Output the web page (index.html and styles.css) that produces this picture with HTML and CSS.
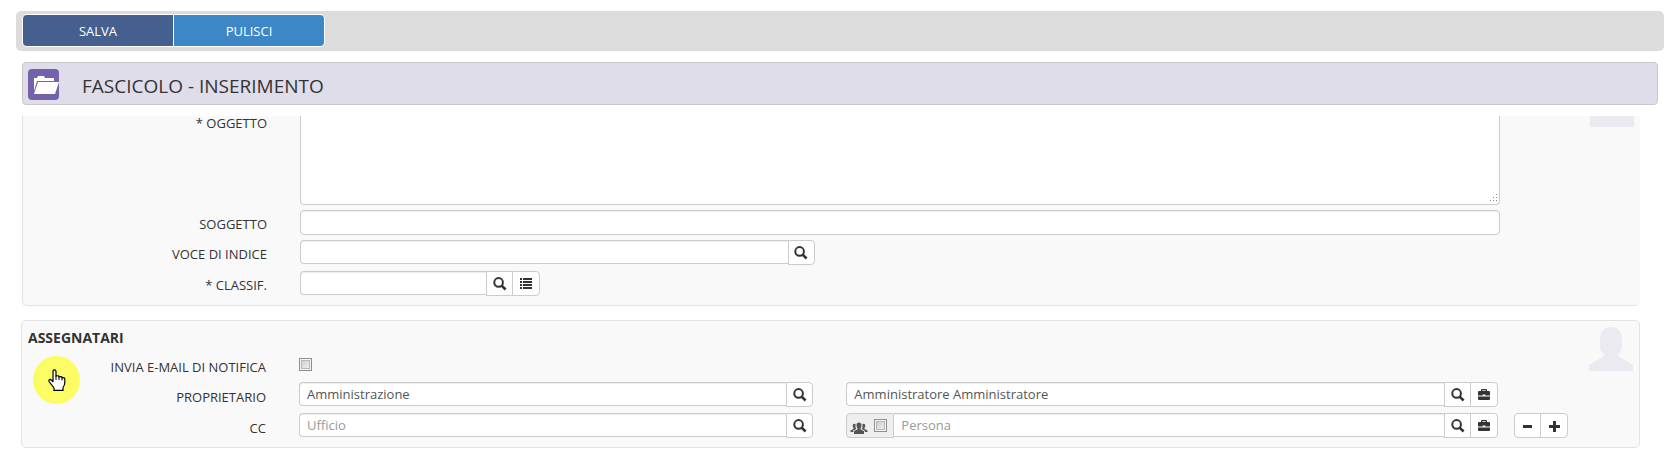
FILE: index.html
```html
<!DOCTYPE html>
<html lang="it">
<head>
  <meta charset="UTF-8">
  <meta name="viewport" content="width=device-width, initial-scale=1.0">
  <title>Fascicolo - Inserimento</title>
  <link rel="stylesheet" href="styles.css">
</head>
<body>

  <!-- shared icons -->
  <svg class="sprite" aria-hidden="true">
    <symbol id="i-search" viewBox="0 0 14 14">
      <circle cx="5.6" cy="5.4" r="4.3" fill="none" stroke="currentColor" stroke-width="2"/>
      <path d="M8.6 8.600L12.600 12.500" stroke="currentColor" stroke-width="2.600"/>
    </symbol>
    <symbol id="i-list" viewBox="0 0 14 14">
      <path d="M1 1h2v2H1zM4 1h9v2H4zM1 4h2v2H1zM4 4h9v2H4zM1 7h2v2H1zM4 7h9v2H4zM1 10h2v2H1zM4 10h9v2H4z" fill="currentColor"/>
    </symbol>
    <symbol id="i-case" viewBox="0 0 14 14">
      <path d="M4 3V2q0-1 1-1h4q1 0 1 1v1h2q1 0 1 1v3.500H8.300V6.600H5.700v.9H1V4q0-1 1-1zM5.300 3h3.400v-.8H5.300zM1 8.500h12V11q0 1-1 1H2q-1 0-1-1z" fill="currentColor"/>
    </symbol>
    <symbol id="i-minus" viewBox="0 0 14 14">
      <path d="M2 6h9v3H2z" fill="currentColor"/>
    </symbol>
    <symbol id="i-plus" viewBox="0 0 14 14">
      <path d="M6 2h3v4h4v3H9v4H6V9H2V6h4z" fill="currentColor"/>
    </symbol>
    <symbol id="i-group" viewBox="0 0 18 12">
      <path d="M9 0.500q2.500 0 2.500 2.800 0 2-1 2.900v1l3.500 2V12H4V9.200l3.500-2v-1q-1-.9-1-2.900Q6.500.5 9 .5z" fill="currentColor"/>
      <path d="M5.600 2q-2-.8-2.800.8-.4 2 .7 3.200v1L.5 8.600V10H3.200V8.800l3-1.900Q5 5 5.600 2zM12.400 2q2-.8 2.800.8.4 2-.7 3.200v1l3 1.600V10h-2.700V8.800l-3-1.900Q13 5 12.400 2z" fill="currentColor"/>
    </symbol>
  </svg>

  <div class="toolbar">
    <div class="btn-bar">
      <button type="button" class="btn btn-save">SALVA</button>
      <button type="button" class="btn btn-clear">PULISCI</button>
    </div>
  </div>

  <header class="page-title">
    <svg class="folder" viewBox="0 0 31 31" aria-hidden="true">
      <rect width="31" height="31" rx="4" fill="#7362ab"/>
      <path d="M6 22V9h3l1-2h6l1 2h9v3H9z" fill="#fff"/>
      <path d="M10 13h21l-4 12H6z" fill="#fff"/>
    </svg>
    <h1>FASCICOLO - INSERIMENTO</h1>
  </header>

  <form class="content">
    <section class="panel panel-top">
      <div class="corner"></div>
      <div class="row row-area">
        <label for="oggetto">* OGGETTO</label>
        <textarea id="oggetto" class="field area"></textarea>
      </div>
      <div class="row">
        <label for="soggetto">SOGGETTO</label>
        <input type="text" id="soggetto" class="field">
      </div>
      <div class="row">
        <label for="voce">VOCE DI INDICE</label>
        <div class="group group-half">
          <input type="text" id="voce" class="field">
          <button type="button" class="addon" aria-label="Cerca"><svg><use href="#i-search"/></svg></button>
        </div>
      </div>
      <div class="row">
        <label for="classif">* CLASSIF.</label>
        <div class="group group-small">
          <input type="text" id="classif" class="field">
          <button type="button" class="addon" aria-label="Cerca"><svg><use href="#i-search"/></svg></button>
          <button type="button" class="addon" aria-label="Elenco"><svg><use href="#i-list"/></svg></button>
        </div>
      </div>
    </section>

    <section class="panel panel-bottom">
      <h2>ASSEGNATARI</h2>
      <svg class="person" viewBox="0 0 44 44" aria-hidden="true">
        <path d="M22 0c7 0 11 5 11 12v7c0 4-2 6-4 8v2l15 9v6H0v-6l15-9v-2c-2-2-4-4-4-8v-7C11 5 15 0 22 0z" fill="#ebeaf1"/>
      </svg>
      <div class="row row-check">
        <label for="notifica">INVIA E-MAIL DI NOTIFICA</label>
        <input type="checkbox" id="notifica" class="check">
      </div>
      <div class="row">
        <label for="proprietario">PROPRIETARIO</label>
        <div class="pair">
          <div class="group group-half">
            <input type="text" id="proprietario" class="field" value="Amministrazione">
            <button type="button" class="addon" aria-label="Cerca"><svg><use href="#i-search"/></svg></button>
          </div>
          <div class="group group-rest">
            <input type="text" class="field" aria-label="Persona proprietario" value="Amministratore Amministratore">
            <button type="button" class="addon" aria-label="Cerca"><svg><use href="#i-search"/></svg></button>
            <button type="button" class="addon" aria-label="Ruolo"><svg><use href="#i-case"/></svg></button>
          </div>
        </div>
      </div>
      <div class="row row-cc">
        <label for="cc">CC</label>
        <div class="pair">
          <div class="group group-half">
            <input type="text" id="cc" class="field" placeholder="Ufficio">
            <button type="button" class="addon" aria-label="Cerca"><svg><use href="#i-search"/></svg></button>
          </div>
          <div class="group group-rest">
            <span class="prepend">
              <svg class="people" aria-hidden="true"><use href="#i-group"/></svg>
              <input type="checkbox" class="check" aria-label="Gruppo">
            </span>
            <input type="text" class="field" aria-label="Persona" placeholder="Persona">
            <button type="button" class="addon" aria-label="Cerca"><svg><use href="#i-search"/></svg></button>
            <button type="button" class="addon" aria-label="Ruolo"><svg><use href="#i-case"/></svg></button>
          </div>
        </div>
        <div class="group">
          <button type="button" class="addon" aria-label="Rimuovi"><svg><use href="#i-minus"/></svg></button>
          <button type="button" class="addon" aria-label="Aggiungi"><svg><use href="#i-plus"/></svg></button>
        </div>
      </div>

      <!-- click highlight with the hand pointer -->
      <div class="pointer">
        <svg viewBox="0 0 18 22" aria-hidden="true">
          <path d="M5 13V2.500Q5 .8 6.500 .8T8 2.500V7q3-.8 3 .8 3-.8 3 1 2.800-.6 2.800 1.500V14q0 2-1.800 4.500V21.300H6V19L1 12.500Q.5 10.500 2.200 10.300 4 10.800 5 13z" fill="#fff" stroke="#000" stroke-width="1.200"/>
          <path d="M8 6.500V11M11 7.500V11M14 8.500V11.500" stroke="#000" fill="none"/>
        </svg>
      </div>
    </section>
  </form>

</body>
</html>
```

FILE: styles.css
```css
* {
  box-sizing: border-box;
}
body {
  margin: 0;
  padding: 11px 16px 14px;
  background-color: #fff;
  color: #333;
  font-family: "Trebuchet MS", "Open Sans", "Liberation Sans", sans-serif;
  font-size: 13px;
}
.sprite {
  display: none;
}
.toolbar {
  display: flex;
  height: 40px;
  padding: 3px 6px;
  border-radius: 5px;
  background-color: #dcdcdc;
}
.btn-bar {
  display: flex;
  gap: 1px;
  height: 33px;
  border: 1px solid #fff;
  border-radius: 5px;
  background-color: #fff;
  overflow: hidden;
}
.btn {
  width: 150px;
  border: none;
  padding: 0;
  color: #fff;
  font: inherit;
}
.btn-save {
  background-color: #45608f;
}
.btn-clear {
  background-color: #3d87c7;
}

.page-title {
  display: flex;
  align-items: center;
  gap: 23px;
  height: 43px;
  margin: 11px 6px 0;
  padding: 2px 5px 0;
  border: 1px solid #c8c8cc;
  border-radius: 4px;
  background-color: #dfddea;
}
.folder {
  width: 31px;
  height: 31px;
}
h1 {
  margin: 0;
  padding-top: 2px;
  font-size: 19px;
  font-weight: 400;
}

.content {
  margin: 11px 24px 0 6px;
}
.panel {
  position: relative;
  border: 1px solid #e3e3e3;
  border-radius: 5px;
  background-color: #f9f9f9;
}
.panel-top {
  padding: 0 140px 8px 0;
  border-top: none;
  border-right: none;
  border-radius: 0 0 5px 5px;
}
.corner {
  position: absolute;
  top: 0;
  right: 6px;
  width: 44px;
  height: 11px;
  background-color: #ebeaf1;
}
.row {
  display: grid;
  grid-template-columns: 244px 1fr;
  column-gap: 33px;
  margin-top: 5px;
}
.row label {
  padding-top: 5px;
  line-height: 18px;
  text-align: right;
}
.row-area {
  margin-top: 0;
}
.row-area label {
  padding-top: 0;
  line-height: 15px;
}

.field {
  width: 100%;
  min-width: 0;
  height: 25px;
  padding: 0 7px;
  border: 1px solid #ccc;
  border-radius: 4px;
  background-color: #fff;
  box-shadow: inset 0 1px 1px rgba(0, 0, 0, 0.075);
  color: #555;
  font: inherit;
}
.field::placeholder {
  color: #999;
}
.area {
  display: block;
  height: 89px;
  border-top: none;
  border-radius: 0 0 4px 4px;
  box-shadow: none;
  resize: vertical;
}
/* dotted grip */
.area::-webkit-resizer {
  background: url("data:image/svg+xml,%3Csvg xmlns='http://www.w3.org/2000/svg' width='12' height='12'%3E%3Cpath d='M9 2h1v1H9zM6 5h1v1H6zM9 5h1v1H9zM3 8h1v1H3zM6 8h1v1H6zM9 8h1v1H9z' fill='%23888'/%3E%3C/svg%3E") no-repeat right bottom;
}

.group {
  display: flex;
  align-items: flex-start;
  min-height: 26px;
}
.group-half {
  width: 42.9%;
}
.group-small {
  width: 20%;
}
.group-rest {
  flex: 1;
}
.group .field {
  flex: 1;
  height: 24px;
  border-right: none;
  border-radius: 4px 0 0 4px;
}
.group .prepend + .field {
  border-radius: 0;
}
.addon {
  display: flex;
  align-items: center;
  justify-content: center;
  width: 27px;
  height: 25px;
  padding: 0;
  border: 1px solid #ccc;
  background-color: #fff;
  color: #333;
}
.addon + .addon {
  margin-left: -1px;
  width: 28px;
}
.addon:first-child {
  border-radius: 4px 0 0 4px;
}
.addon:last-child {
  border-radius: 0 4px 4px 0;
}
.addon svg {
  width: 14px;
  height: 14px;
}
.prepend {
  display: flex;
  align-items: center;
  gap: 6px;
  width: 48px;
  height: 25px;
  padding-left: 3px;
  border: 1px solid #ccc;
  border-radius: 4px 0 0 4px;
  background-color: #eee;
  color: #555;
}
.prepend + .field {
  border-left: none;
}
.people {
  width: 18px;
  height: 12px;
  margin-top: 4px;
}
.check {
  appearance: none;
  width: 13px;
  height: 13px;
  margin: 0;
  border: 1px solid #8e8f8f;
  background: linear-gradient(135deg, #c4c8d2, #f6f6f6);
  box-shadow: inset 0 0 0 1px #f4f4f4, inset 0 0 0 2px #b5bac0;
}

.panel-bottom {
  margin: 14px 0 0 -1px;
  padding: 8px 141px 8px 0;
}
.panel-bottom .row label {
  padding-top: 6px;
}
h2 {
  margin: 0 0 0 6px;
  font-size: 14px;
  line-height: 18px;
  font-weight: 700;
}
.person {
  position: absolute;
  top: 6px;
  right: 6px;
  width: 44px;
  height: 44px;
}
.row-check {
  align-items: center;
  margin-bottom: 6px;
}
.row-cc {
  position: relative;
}
.pair {
  display: flex;
  gap: 33px;
}
.row-cc > .group {
  position: absolute;
  left: 100%;
  margin-left: 16px;
}
.pointer {
  display: flex;
  align-items: center;
  justify-content: center;
  position: absolute;
  top: 35px;
  left: 11px;
  width: 47px;
  height: 48px;
  border-radius: 50%;
  background-color: #fcfc64;
}
.pointer svg {
  width: 18px;
  height: 22px;
}
```
